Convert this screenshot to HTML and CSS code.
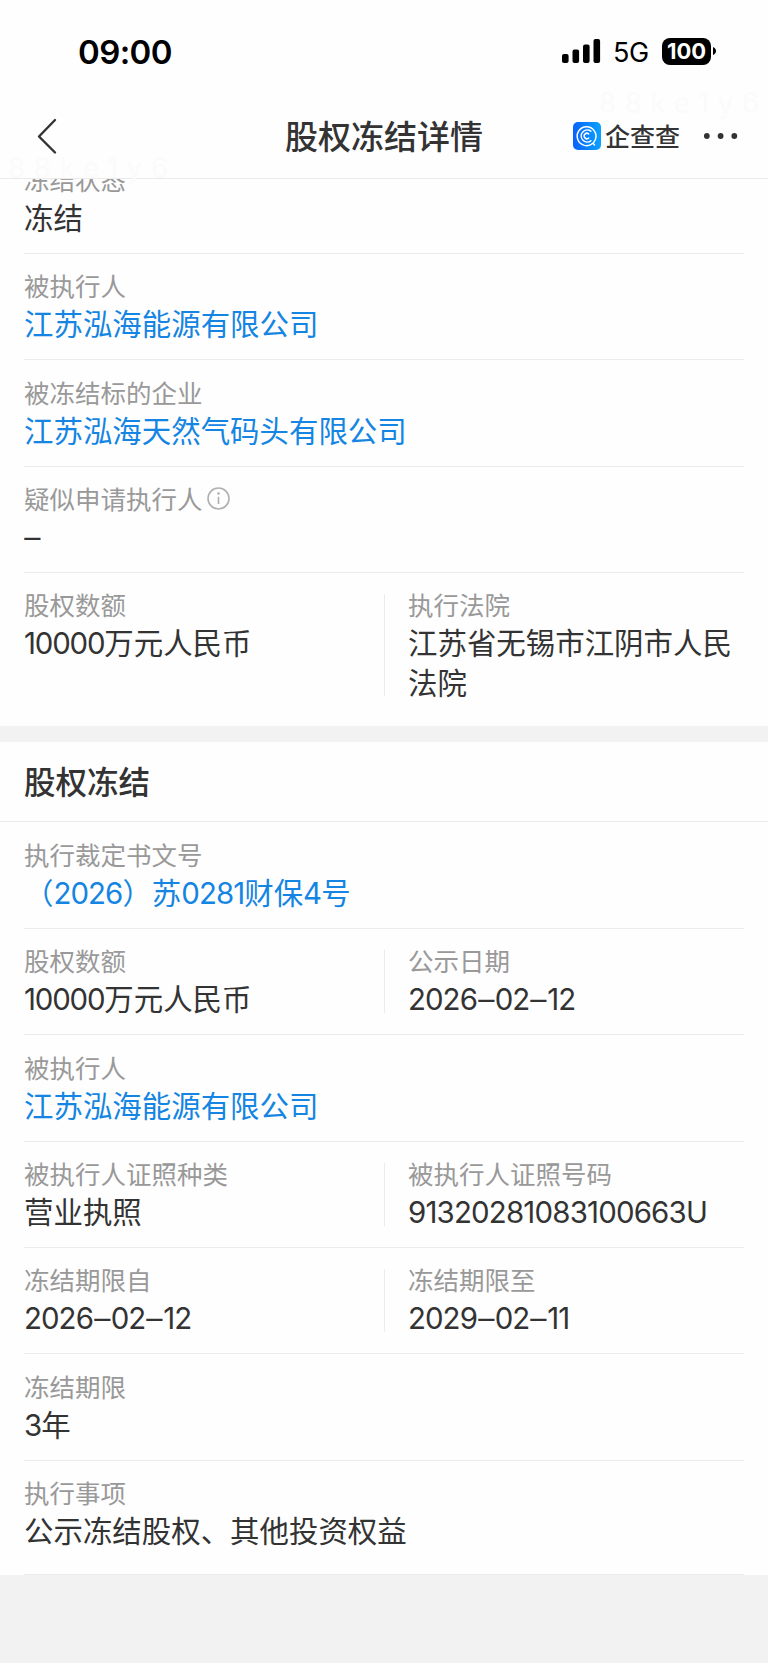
FILE: index.html
```html
<!DOCTYPE html>
<html lang="zh-CN">
<head>
<meta charset="utf-8">
<title>股权冻结详情</title>
<link rel="stylesheet" href="styles.css">
</head>
<body>
<div class="screen">
  <header class="top">
    <div class="status">
      <span class="time">09:00</span>
      <div class="status-right">
        <svg class="signal" width="40" height="24" viewBox="0 0 40 24"><rect x="0" y="15" width="6.6" height="9" rx="2"/><rect x="10.5" y="10.5" width="6.6" height="13.5" rx="2"/><rect x="21" y="5.500" width="6.600" height="18.500" rx="2"/><rect x="31.500" y="0" width="6.600" height="24" rx="2"/></svg>
        <span class="net">5G</span>
        <span class="battery">100</span>
        <svg class="cap" width="3" height="8" viewBox="0 0 3 8"><path d="M0 0C4 1.500 4 6.500 0 8Z"/></svg>
      </div>
    </div>
    <nav class="nav">
      <svg class="back" width="22" height="38" viewBox="0 0 22 38"><path d="M19 3L3 19.500L19 35.500"/></svg>
      <h1 class="title">股权冻结详情</h1>
      <div class="brand">
        <svg width="28" height="28" viewBox="0 0 28 28">
          <defs><linearGradient id="g" x1="0" x2="1"><stop offset="0" stop-color="#0a62fb"/><stop offset="1" stop-color="#0aa2ff"/></linearGradient></defs>
          <rect width="28" height="28" rx="5" fill="url(#g)"/>
          <g fill="none" stroke="#fff" stroke-width="1.500" stroke-linecap="round"><path d="M19.800 21.300A9.400 9.400 0 1 1 22.400 17.500L20.200 21.500L21.500 23"/><path d="M17.800 9.200A6 6 0 1 0 17.800 18.800"/><path d="M15.700 12A2.700 2.700 0 1 0 15.700 16"/></g>
        </svg>
        <span class="brand-name">企查查</span>
      </div>
      <svg class="more" width="34" height="6" viewBox="0 0 34 6"><circle cx="2.800" cy="3" r="2.900"/><circle cx="16.600" cy="3" r="2.900"/><circle cx="30.300" cy="3" r="2.900"/></svg>
    </nav>
    <span class="mark mark-left">88ke1y6</span>
    <span class="mark mark-right">88ke1y6</span>
  </header>

  <main class="scroll">
    <section class="group group-first">
      <div class="row"><div class="cell"><div class="label">冻结状态</div><div class="value">冻结</div></div></div>
      <div class="row"><div class="cell"><div class="label">被执行人</div><div class="value link">江苏泓海能源有限公司</div></div></div>
      <div class="row"><div class="cell"><div class="label">被冻结标的企业</div><div class="value link">江苏泓海天然气码头有限公司</div></div></div>
      <div class="row"><div class="cell"><div class="label">疑似申请执行人<svg class="info" width="23" height="23" viewBox="0 0 23 23"><circle cx="11.500" cy="11.500" r="10.500"/><path d="M11.500 9.800V17"/><circle class="dot" cx="11.500" cy="6.500" r="1.300"/></svg></div><div class="value"><span class="num"><span class="dash dash-lone">–</span></span></div></div></div>
      <div class="row row-last">
        <div class="cell"><div class="label">股权数额</div><div class="value"><span class="num tight">10000</span>万元人民币</div></div>
        <div class="cell"><div class="label">执行法院</div><div class="value">江苏省无锡市江阴市人民法院</div></div>
      </div>
    </section>

    <section class="group">
      <h2 class="section-title">股权冻结</h2>
      <div class="row"><div class="cell"><div class="label">执行裁定书文号</div><div class="value link">（<span class="num">2026</span>）苏<span class="num">0281</span>财保<span class="num">4</span>号</div></div></div>
      <div class="row">
        <div class="cell"><div class="label">股权数额</div><div class="value"><span class="num tight">10000</span>万元人民币</div></div>
        <div class="cell"><div class="label">公示日期</div><div class="value"><span class="num">2026<span class="dash">–</span>02<span class="dash">–</span>12</span></div></div>
      </div>
      <div class="row"><div class="cell"><div class="label">被执行人</div><div class="value link">江苏泓海能源有限公司</div></div></div>
      <div class="row">
        <div class="cell"><div class="label">被执行人证照种类</div><div class="value">营业执照</div></div>
        <div class="cell"><div class="label">被执行人证照号码</div><div class="value"><span class="num code">91320281083100663U</span></div></div>
      </div>
      <div class="row">
        <div class="cell"><div class="label">冻结期限自</div><div class="value"><span class="num">2026<span class="dash">–</span>02<span class="dash">–</span>12</span></div></div>
        <div class="cell"><div class="label">冻结期限至</div><div class="value"><span class="num">2029<span class="dash">–</span>02<span class="dash">–</span>11</span></div></div>
      </div>
      <div class="row"><div class="cell"><div class="label">冻结期限</div><div class="value"><span class="num">3</span>年</div></div></div>
      <div class="row row-end"><div class="cell"><div class="label">执行事项</div><div class="value">公示冻结股权、其他投资权益</div></div></div>
    </section>
  </main>
</div>
</body>
</html>
```
FILE: styles.css
```css
* { box-sizing: border-box; }
body {
  margin: 0;
  background: #f2f2f2;
  color: #333;
  font-family: "Noto Sans CJK SC", sans-serif;
}
.screen {
  width: 768px;
  height: 1663px;
  display: flex;
  flex-direction: column;
  overflow: hidden;
}
.top {
  position: relative;
  flex: none;
  height: 179px;
  background: #fefefe;
  border-bottom: 1px solid #ebebeb;
}
.status {
  height: 102px;
  padding: 0 52px 0 78px;
  display: flex;
  justify-content: space-between;
  align-items: center;
  color: #000;
  font-family: Inter, sans-serif;
}
.time { padding-top: 1px; font-size: 33px; font-weight: 600; letter-spacing: -0.6px; }
.status-right { display: flex; align-items: center; }
.net { margin-left: 11px; width: 38px; padding-top: 2px; font-size: 27px; font-weight: 400; letter-spacing: -0.5px; }
.battery {
  width: 49px;
  height: 27px;
  margin-left: 11px;
  border-radius: 8px;
  background: #000;
  color: #fff;
  font-size: 22px;
  font-weight: 700;
  line-height: 27px;
  text-align: center;
}
.cap { margin-left: 2px; }
.nav {
  height: 68px;
  padding: 0 30px 0 36px;
  display: grid;
  grid-template-columns: 249px 1fr auto 34px;
  align-items: center;
}
.back { fill: none; stroke: #333; stroke-width: 2.4; stroke-linecap: round; stroke-linejoin: round; }
.title { margin: 0; padding-bottom: 2px; font-size: 33px; font-weight: 500; line-height: 44px; white-space: nowrap; }
.brand {
  display: flex;
  align-items: center;
  gap: 4px;
  margin-right: 24px;
  font-size: 25px;
  font-weight: 500;
  line-height: 28px;
}
.brand-name { padding-bottom: 3px; }
.more { fill: #333; }
.mark {
  position: absolute;
  color: #fbfbfb;
  font: 28px/28px Inter, sans-serif;
  letter-spacing: 8.5px;
}
.mark-left { left: 8px; top: 154px; }
.mark-right { left: 599px; top: 89px; }

.scroll { flex: 1; overflow: hidden; }
.group { background: #fefefe; margin-bottom: 16px; }
.group-first { margin-top: -31.400px; }
.row {
  position: relative;
  margin: 0 24px;
  height: 106.35px;
  padding-top: 13.4px;
  border-bottom: 1px solid #ececec;
  display: grid;
  grid-template-columns: 360px 360px;
}
.row .cell:only-child { grid-column: 1 / -1; }
.cell { position: relative; }
.cell + .cell { padding-left: 24px; }
.cell + .cell::before {
  content: "";
  position: absolute;
  left: 0;
  top: 8px;
  bottom: 21px;
  width: 1px;
  background: #ececec;
}
.row-last { height: 153.5px; border-bottom: 0; }
.row-last .cell + .cell::before { bottom: 30px; }
.row-end { height: 114.4px; }
.label {
  height: 36px;
  display: flex;
  align-items: center;
  color: #999;
  font-size: 25.5px;
  font-weight: 400;
  line-height: 36px;
}
.info { margin: 1px 0 0 4px; fill: none; stroke: #b0b0b0; stroke-width: 1.6; }
.info .dot { fill: #b0b0b0; stroke: none; }
.value { font-size: 29.45px; line-height: 39.3px; }
.link { color: #1485e2; }
.num { font-family: Inter, sans-serif; letter-spacing: -0.95px; }
.tight { letter-spacing: -1.2px; }
.code { letter-spacing: -0.82px; }
.dash { display: inline-block; margin: 0 2px; line-height: 1; transform: scaleX(1.1); }
.dash-lone { margin-left: 1px; }
.section-title {
  margin: 0;
  height: 80px;
  padding-left: 24px;
  border-bottom: 1px solid #ececec;
  font-size: 31.5px;
  font-weight: 500;
  line-height: 76px;
}
```
